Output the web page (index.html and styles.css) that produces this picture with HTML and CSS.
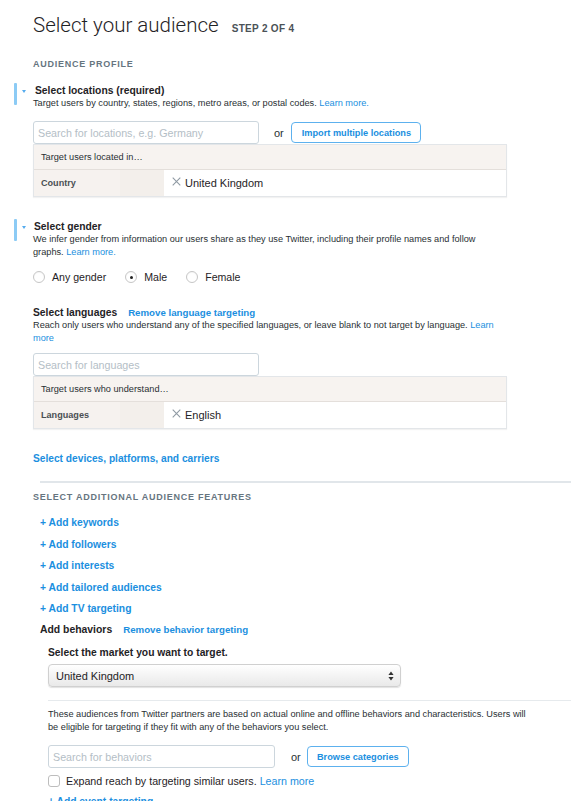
FILE: index.html
```html
<!DOCTYPE html>
<html lang="en">
<head>
<meta charset="utf-8">
<title>Select your audience</title>
<link rel="stylesheet" href="styles.css">
</head>
<body>
<div class="page">
  <header class="title-row">
    <h1>Select your audience</h1>
    <span class="step">STEP 2 OF 4</span>
  </header>

  <div class="label label-profile">AUDIENCE PROFILE</div>

  <section class="group g-loc">
    <div class="group-head marked">
      <span class="caret"></span>
      <h2>Select locations (required)</h2>
    </div>
    <p class="desc">Target users by country, states, regions, metro areas, or postal codes. <a class="link">Learn more.</a></p>
    <div class="search-row">
      <input class="search" type="text" placeholder="Search for locations, e.g. Germany">
      <span class="or">or</span>
      <button class="btn">Import multiple locations</button>
    </div>
    <div class="table">
      <div class="thead">Target users located in…</div>
      <div class="trow">
        <div class="tkey">Country</div>
        <div class="tval"><svg class="x" width="9" height="9" viewBox="0 0 9 9"><path d="M0.7 0.7L8.3 8.3M8.3 0.7L0.7 8.3" stroke="#8f9aa3" stroke-width="1.1" fill="none"/></svg>United Kingdom</div>
      </div>
    </div>
  </section>

  <section class="group g-gender">
    <div class="group-head marked">
      <span class="caret"></span>
      <h2>Select gender</h2>
    </div>
    <p class="desc desc-gender">We infer gender from information our users share as they use Twitter, including their profile names and follow graphs. <a class="link">Learn more.</a></p>
    <div class="radios">
      <span class="radio"></span><span class="rlabel">Any gender</span>
      <span class="radio checked"></span><span class="rlabel">Male</span>
      <span class="radio"></span><span class="rlabel">Female</span>
    </div>
  </section>

  <section class="group g-lang">
    <div class="group-head inline-head">
      <h2>Select languages</h2>
      <a class="link strong-link">Remove language targeting</a>
    </div>
    <p class="desc">Reach only users who understand any of the specified languages, or leave blank to not target by language. <a class="link">Learn more</a></p>
    <div class="search-row lang-row">
      <input class="search" type="text" placeholder="Search for languages">
    </div>
    <div class="table">
      <div class="thead">Target users who understand…</div>
      <div class="trow">
        <div class="tkey">Languages</div>
        <div class="tval"><svg class="x" width="9" height="9" viewBox="0 0 9 9"><path d="M0.7 0.7L8.3 8.3M8.3 0.7L0.7 8.3" stroke="#8f9aa3" stroke-width="1.1" fill="none"/></svg>English</div>
      </div>
    </div>
  </section>

  <a class="link devices">Select devices, platforms, and carriers</a>

  <div class="divider"></div>
  <div class="label label-additional">SELECT ADDITIONAL AUDIENCE FEATURES</div>

  <ul class="adds">
    <li><a class="link add">+ Add keywords</a></li>
    <li><a class="link add">+ Add followers</a></li>
    <li><a class="link add">+ Add interests</a></li>
    <li><a class="link add">+ Add tailored audiences</a></li>
    <li><a class="link add">+ Add TV targeting</a></li>
    <li class="beh-head"><span class="beh-title">Add behaviors</span><a class="link strong-link">Remove behavior targeting</a></li>
  </ul>

  <div class="behaviors">
    <div class="market">Select the market you want to target.</div>
    <div class="select">
      <span>United Kingdom</span>
      <svg class="arrows" width="6" height="10" viewBox="0 0 6 10"><path d="M3 0.5L5.6 4H0.4Z M3 9.5L0.4 6H5.6Z" fill="#333"/></svg>
    </div>
    <div class="thin-divider"></div>
    <p class="desc beh-desc">These audiences from Twitter partners are based on actual online and offline behaviors and characteristics. Users will be eligible for targeting if they fit with any of the behaviors you select.</p>
    <div class="search-row beh-row">
      <input class="search beh-search" type="text" placeholder="Search for behaviors">
      <span class="or or-beh">or</span>
      <button class="btn btn-browse">Browse categories</button>
    </div>
    <div class="check-row">
      <span class="checkbox"></span>
      <span class="clabel">Expand reach by targeting similar users. <a class="link plain">Learn more</a></span>
    </div>
    <a class="link add event">+ Add event targeting</a>
  </div>
</div>
</body>
</html>
```

FILE: styles.css
```css
* { box-sizing: border-box; }

body {
  margin: 0;
  background: #ffffff;
  color: #292f33;
  font-family: "Liberation Sans", Arial, sans-serif;
}

.page {
  padding: 13px 15px 0 33px;
  width: 586px;
  overflow: hidden;
}

.title-row {
  display: flex;
  align-items: baseline;
  gap: 13px;
  height: 24px;
}

h1 {
  margin: 0;
  font-family: Roboto, "Liberation Sans", sans-serif;
  font-weight: 300;
  font-size: 20.5px;
  line-height: 24px;
  color: #1f2326;
}

.step {
  font-size: 10px;
  font-weight: bold;
  letter-spacing: 0.3px;
  color: #4b5257;
}

.label {
  font-size: 9px;
  font-weight: bold;
  letter-spacing: 0.75px;
  line-height: 12px;
  color: #66757f;
}

.label-profile { margin-top: 21px; }

.link {
  color: #1b8fe0;
  text-decoration: none;
  cursor: pointer;
}

.group { position: relative; }

.group-head {
  position: relative;
  display: flex;
  align-items: center;
  height: 13px;
}

.marked::before {
  content: "";
  position: absolute;
  left: -19px;
  top: -1px;
  width: 3px;
  height: 22px;
  border-radius: 1px;
  background: #8ccbf5;
}

.caret {
  position: absolute;
  left: -11px;
  top: 6px;
  width: 0;
  height: 0;
  border-left: 2.5px solid transparent;
  border-right: 2.5px solid transparent;
  border-top: 3px solid #55acee;
}

h2 {
  margin: 0 0 0 2px;
  font-size: 10.3px;
  font-weight: bold;
  line-height: 13px;
  color: #1f2326;
}

.g-gender h2 { margin-left: 1px; }
.inline-head h2 { margin-left: 0; }

.inline-head { gap: 11px; }

.strong-link {
  font-size: 9.7px;
  font-weight: bold;
  line-height: 13px;
}

.desc {
  margin: 0;
  font-size: 9.2px;
  line-height: 13px;
  width: 474px;
  color: #292f33;
}

.g-loc { margin-top: 13.5px; }

.search-row {
  display: flex;
  align-items: center;
  height: 23px;
  margin-top: 11.5px;
}

.search {
  width: 226px;
  height: 23px;
  margin: 0;
  padding: 0 4px;
  border: 1px solid #ccd6dd;
  border-radius: 3px;
  background: #fff;
  font-family: "Liberation Sans", Arial, sans-serif;
  font-size: 10.7px;
  color: #292f33;
  outline: none;
}

.search::placeholder { color: #b4bec6; }

.or {
  margin-left: 15px;
  font-size: 11px;
  color: #292f33;
}

.btn {
  margin-left: 7px;
  height: 21px;
  padding: 0 9px 0 10px;
  border: 1px solid #5db1ee;
  border-radius: 4px;
  background: #fff;
  color: #1b8fe0;
  font-family: "Liberation Sans", Arial, sans-serif;
  font-size: 9.2px;
  font-weight: bold;
}

.table {
  width: 474px;
  border: 1px solid #e3e6e9;
  box-shadow: 0 1px 1px rgba(0, 0, 0, 0.05);
}

.thead {
  display: flex;
  align-items: center;
  height: 25px;
  padding-left: 7px;
  background: #f7f3f0;
  border-bottom: 1px solid #e4dfdb;
  font-size: 9.2px;
  color: #292f33;
}

.trow {
  display: flex;
  height: 26px;
}

.tkey {
  display: flex;
  align-items: center;
  width: 130px;
  padding-left: 7px;
  background: linear-gradient(90deg, #f6f2ef 0, #f6f2ef 66%, #f3efeb 66%, #f3efeb 100%);
  font-size: 9.1px;
  font-weight: bold;
  color: #4a4f53;
}

.tval {
  display: flex;
  align-items: center;
  flex: 1;
  padding-left: 8px;
  background: #fff;
  font-size: 11px;
  color: #1f2326;
}

.x {
  margin-right: 4px;
  margin-top: -3px;
}

.g-gender { margin-top: 22.5px; }

.radios {
  display: flex;
  align-items: center;
  height: 16px;
  margin-top: 10.5px;
}

.radio {
  position: relative;
  width: 12px;
  height: 12px;
  border: 1px solid #c6c6c6;
  border-radius: 50%;
  background: #fff;
  box-shadow: inset 0 1px 1px rgba(0, 0, 0, 0.04);
}

.radio.checked::after {
  content: "";
  position: absolute;
  left: 3.5px;
  top: 3.5px;
  width: 3px;
  height: 3px;
  border-radius: 50%;
  background: #222;
}

.rlabel {
  margin-left: 7px;
  margin-right: 19px;
  font-size: 10.6px;
  color: #1f2326;
}

.g-lang { margin-top: 20.5px; }

.lang-row { margin-top: 8.5px; }

.devices {
  display: block;
  margin-top: 22.5px;
  font-size: 10.2px;
  font-weight: bold;
  line-height: 13px;
}

.divider {
  margin: 16.5px 0 0 7px;
  width: 531px;
  height: 2px;
  background: #e1e6ea;
}

.label-additional { margin-top: 8px; }

.adds {
  list-style: none;
  margin: 7px 0 0 7px;
  padding: 0;
}

.adds li {
  line-height: 21.5px;
  height: 21.5px;
}

.add {
  font-size: 10.3px;
  font-weight: bold;
}

.adds .beh-head {
  display: flex;
  align-items: center;
  gap: 11px;
  margin-top: 1.5px;
}

.beh-title {
  font-size: 10.4px;
  font-weight: bold;
  color: #1f2326;
}

.behaviors {
  margin-left: 15px;
}

.market {
  margin-top: 5px;
  font-size: 10.3px;
  font-weight: bold;
  line-height: 13px;
  color: #1f2326;
}

.select {
  display: flex;
  align-items: center;
  justify-content: space-between;
  width: 353px;
  height: 23px;
  margin-top: 5.5px;
  padding: 0 6px 0 7px;
  border: 1px solid #d0d0d0;
  border-radius: 4px;
  background: linear-gradient(#ffffff, #e9e9e9);
  box-shadow: 0 1px 1px rgba(0, 0, 0, 0.12);
  font-size: 11px;
  color: #1f2326;
}

.thin-divider {
  margin-top: 13px;
  width: 523px;
  height: 1px;
  background: #e6eaed;
}

.beh-desc {
  margin-top: 6.5px;
  width: 478px;
}

.beh-row { margin-top: 11.5px; }

.beh-search { width: 227px; }

.or-beh { margin-left: 16px; }

.btn-browse {
  margin-left: 6px;
  width: 102px;
  padding: 0;
}

.check-row {
  display: flex;
  align-items: center;
  height: 14px;
  margin-top: 6px;
}

.checkbox {
  width: 12px;
  height: 12px;
  border: 1px solid #bdbdbd;
  border-radius: 3px;
  background: #fff;
}

.clabel {
  margin-left: 6px;
  font-size: 10.7px;
  color: #1f2326;
}

.plain { font-weight: normal; }

.event {
  display: block;
  margin-top: 7px;
  line-height: 13px;
}
```
